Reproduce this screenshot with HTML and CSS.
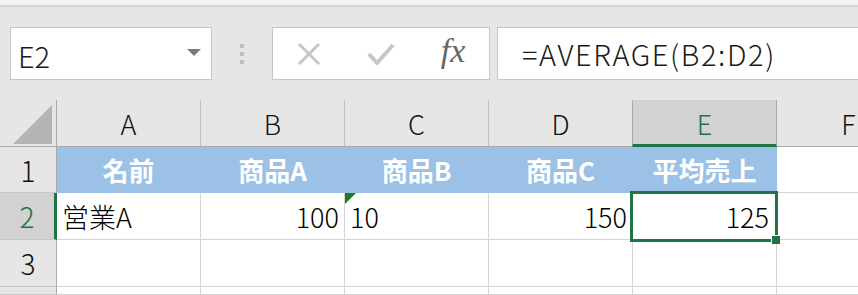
FILE: index.html
```html
<!DOCTYPE html>
<html lang="ja">
<head>
    <meta charset="UTF-8">
    <title>Excel AVERAGE</title>
    <link rel="stylesheet" href="styles.css">
</head>
<body>
    <div class="strip"></div>

    <div class="fbar">
        <div class="namebox">
            <span>E2</span>
            <span class="caret"></span>
        </div>
        <div class="dots"><i></i><i></i><i></i></div>
        <div class="btns">
            <div class="btn">
                <svg width="24" height="24" viewBox="0 0 24 24"><path d="M2 2 L22 22 M22 2 L2 22" stroke="#c6c6c6" stroke-width="3" fill="none"/></svg>
            </div>
            <div class="btn">
                <svg width="28" height="22" viewBox="0 0 28 22"><path d="M2 11 L10 20 L26 2" stroke="#c6c6c6" stroke-width="4" fill="none"/></svg>
            </div>
            <div class="btn fx">fx</div>
        </div>
        <div class="formula">=AVERAGE(B2:D2)</div>
    </div>

    <div class="sheet">
        <!-- column headers -->
        <div class="corner">
            <svg width="40" height="40" viewBox="0 0 40 40"><polygon points="0,39 39,0 39,39" fill="#b4b4b4"/></svg>
        </div>
        <div class="colhd">A</div>
        <div class="colhd">B</div>
        <div class="colhd">C</div>
        <div class="colhd">D</div>
        <div class="colhd active">E</div>
        <div class="colhd">F</div>

        <!-- row 1 -->
        <div class="rowhd">1</div>
        <div class="cell head">名前</div>
        <div class="cell head">商品A</div>
        <div class="cell head">商品B</div>
        <div class="cell head">商品C</div>
        <div class="cell head">平均売上</div>
        <div class="cell"></div>

        <!-- row 2 -->
        <div class="rowhd active">2</div>
        <div class="cell">営業A</div>
        <div class="cell num">100</div>
        <div class="cell warn">10</div>
        <div class="cell num">150</div>
        <div class="cell num sel">125<span class="handle"></span></div>
        <div class="cell"></div>

        <!-- row 3 -->
        <div class="rowhd">3</div>
        <div class="cell"></div>
        <div class="cell"></div>
        <div class="cell"></div>
        <div class="cell"></div>
        <div class="cell"></div>
        <div class="cell"></div>

        <!-- row 4 -->
        <div class="rowhd"></div>
        <div class="cell"></div>
        <div class="cell"></div>
        <div class="cell"></div>
        <div class="cell"></div>
        <div class="cell"></div>
        <div class="cell"></div>
    </div>
</body>
</html>
```

FILE: styles.css
```css
html, body {
    overflow: hidden;
}

body {
    margin: 0;
    background-color: #e6e6e6;
    font-family: "Noto Sans CJK JP", "Noto Sans", sans-serif;
    color: #1a1a1a;
}

.strip {
    height: 5px;
    background-color: #f3f3f3;
    border-bottom: 2px solid #d4d4d4;
}

/* formula bar */
.fbar {
    display: flex;
    height: 53px;
    margin: 20px 0;
    padding-left: 10px;
}

.namebox {
    box-sizing: border-box;
    width: 202px;
    background: #fff;
    border: 1px solid #c6c6c6;
    display: flex;
    align-items: center;
    justify-content: space-between;
    padding: 3px 10px 0 7px;
    font-size: 29px;
    font-weight: 300;
}

.caret {
    width: 0;
    height: 0;
    border-left: 7px solid transparent;
    border-right: 7px solid transparent;
    border-top: 7px solid #7a7a7a;
    margin-bottom: 6px;
}

.dots {
    width: 60px;
    display: flex;
    flex-direction: column;
    align-items: center;
    justify-content: center;
    gap: 4px;
}

.dots i {
    width: 4px;
    height: 4px;
    background: #bdbdbd;
}

.btns {
    box-sizing: border-box;
    width: 218px;
    background: #fff;
    border: 1px solid #c6c6c6;
    display: flex;
}

.btn {
    width: 72px;
    display: flex;
    align-items: center;
    justify-content: center;
}

.fx {
    font-family: "Liberation Serif", serif;
    font-style: italic;
    font-size: 34px;
    color: #666;
    padding-bottom: 5px;
}

.formula {
    flex: 1;
    margin-left: 7px;
    background: #fff;
    border: 1px solid #c6c6c6;
    border-right: none;
    display: flex;
    align-items: center;
    padding-left: 24px;
    padding-bottom: 2px;
    font-size: 29px;
    font-weight: 300;
    letter-spacing: 1.6px;
}

/* sheet grid */
.sheet {
    display: grid;
    grid-template-columns: 57px repeat(6, 144px);
    grid-template-rows: 47px 46px 47px 47px 8px;
}

.sheet > div {
    box-sizing: border-box;
    display: flex;
    align-items: center;
}

.corner {
    border-right: 1px solid #ababab;
    border-bottom: 1px solid #ababab;
    justify-content: flex-end;
    padding: 3px 3px 0 0;
}

.colhd {
    justify-content: center;
    border-right: 1px solid #c0c0c0;
    border-bottom: 1px solid #ababab;
    font-size: 27px;
    font-weight: 300;
    color: #111;
}

.colhd.active {
    background: #d2d2d2;
    color: #217346;
    border-right-color: #ababab;
    border-left: 1px solid #ababab;
    border-bottom: 3px solid #217346;
    margin-left: -1px;
    padding-top: 2px;
}

.rowhd {
    justify-content: center;
    border-right: 1px solid #ababab;
    border-bottom: 1px solid #c8c8c8;
    font-size: 28px;
    font-weight: 300;
    color: #111;
}

.rowhd.active {
    background: #d2d2d2;
    color: #217346;
    border-right: 3px solid #217346;
}

.cell {
    background: #fff;
    border-right: 1px solid #d4d4d4;
    border-bottom: 1px solid #d4d4d4;
    padding: 0 5px;
    font-size: 27px;
    font-weight: 300;
    color: #000;
}

.cell.head {
    background: #9bc2e6;
    border-color: #9bc2e6;
    justify-content: center;
    color: #fff;
    font-size: 26px;
    font-weight: bold;
}

.cell.num {
    justify-content: flex-end;
}

.warn {
    position: relative;
}

.warn::before {
    content: "";
    position: absolute;
    top: 0;
    left: 0;
    border-top: 11px solid #1a7f1a;
    border-right: 11px solid transparent;
}

.sel {
    position: relative;
    padding-right: 7px;
}

.sel::after {
    content: "";
    position: absolute;
    top: -2px;
    left: -3px;
    right: -2px;
    bottom: -3px;
    border: 3px solid #217346;
}

.handle {
    position: absolute;
    right: -4px;
    bottom: -5px;
    width: 8px;
    height: 8px;
    background: #217346;
    border-left: 1px solid #fff;
    border-top: 1px solid #fff;
    z-index: 1;
}
```
